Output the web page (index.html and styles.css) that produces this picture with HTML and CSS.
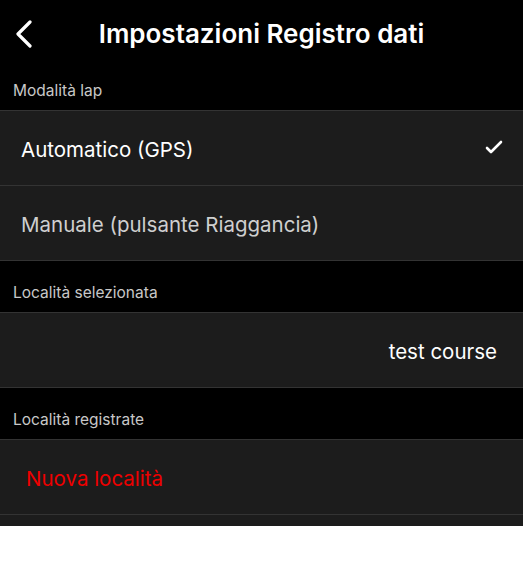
FILE: index.html
```html
<!DOCTYPE html>
<html lang="it">
<head>
    <meta charset="UTF-8">
    <meta name="viewport" content="width=device-width, initial-scale=1.0">
    <title>Impostazioni Registro dati</title>
    <link rel="stylesheet" href="styles.css">
</head>
<body>

<div class="screen">
    <div class="navbar">
        <div class="back">
            <svg width="18" height="28" viewBox="0 0 18 28">
                <path d="M15 2 L3 14 L15 26" fill="none" stroke="#fff" stroke-width="3.2" stroke-linecap="round" stroke-linejoin="round"/>
            </svg>
        </div>
        <h1>Impostazioni Registro dati</h1>
        <div></div>
    </div>

    <div class="section-label">Modalità lap</div>
    <div class="group">
        <div class="row">
            <span>Automatico (GPS)</span>
            <svg class="check" width="18" height="15" viewBox="0 0 18 15">
                <path d="M2 8 L6 12 L16 2" fill="none" stroke="#fff" stroke-width="2.6" stroke-linecap="round" stroke-linejoin="round"/>
            </svg>
        </div>
        <div class="row dim">
            <span>Manuale (pulsante Riaggancia)</span>
        </div>
    </div>

    <div class="section-label">Località selezionata</div>
    <div class="group">
        <div class="row value">
            <span>test course</span>
        </div>
    </div>

    <div class="section-label">Località registrate</div>
    <div class="group">
        <div class="row action">
            <span>Nuova località</span>
        </div>
        <div class="row"></div>
    </div>
</div>

</body>
</html>
```

FILE: styles.css
```css
body {
    margin: 0;
    padding: 0;
    background-color: #fff;
    font-family: Inter, "Liberation Sans", sans-serif;
}
.screen {
    background-color: #000;
    height: 526px;
    overflow: hidden;
}
.navbar {
    display: grid;
    grid-template-columns: 1fr auto 1fr;
    align-items: center;
    height: 51px;
    padding-top: 8px;
}
.back {
    padding-left: 15px;
    display: flex;
    align-items: center;
}
h1 {
    margin: 0;
    color: #fff;
    font-size: 26px;
    font-weight: 600;
}
.section-label {
    height: 41px;
    padding: 0 13px 10px;
    display: flex;
    align-items: flex-end;
    color: #c8c8c8;
    font-size: 15.5px;
    line-height: 18px;
}
.group {
    border-top: 1px solid #333;
}
.row {
    height: 71px;
    padding: 3px 20px 0 21px;
    border-bottom: 1px solid #333;
    background-color: #1c1c1c;
    display: flex;
    align-items: center;
    justify-content: space-between;
    color: #fff;
    font-size: 20.5px;
}
.row.dim {
    color: #cfcfcf;
}
.row.value {
    justify-content: flex-end;
    padding-right: 26px;
}
.row.action {
    color: #ee0000;
    padding-left: 26px;
}
.check {
    margin-top: -4px;
}
```
